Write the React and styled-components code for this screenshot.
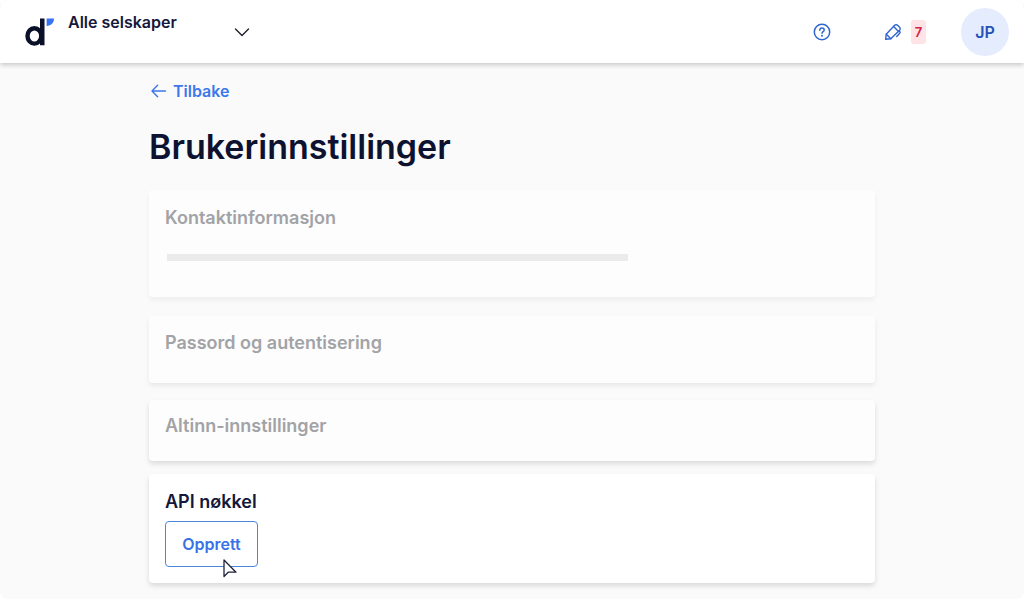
import React from "react";
import styled, { createGlobalStyle } from "styled-components";

const GlobalStyle = createGlobalStyle`
  * { box-sizing: border-box; }
  html { background: #ffffff; }
  body {
    margin: 0;
    font-family: Inter, "Liberation Sans", sans-serif;
    color: #0d1230;
    -webkit-font-smoothing: antialiased;
  }
`;

const Page = styled.div`
  min-height: 100vh;
  background: #fafafa;
  border-radius: 8px;
  overflow: hidden;
`;

const Header = styled.header`
  display: flex;
  align-items: center;
  height: 63px;
  padding: 0 15px 0 24px;
  background: #ffffff;
  border-radius: 8px 8px 0 0;
  box-shadow: 0 2px 5px rgba(0, 0, 0, 0.2);
`;

const HomeLink = styled.a`
  display: flex;
  margin-right: 12px;
`;

const CompanyButton = styled.button`
  display: flex;
  justify-content: space-between;
  width: 182px;
  height: 40px;
  padding: 0;
  border: 0;
  background: none;
  color: #14183a;
  font: 600 16px/20px Inter, "Liberation Sans", sans-serif;
  text-align: left;
  cursor: pointer;

  svg { align-self: center; }
`;

const Actions = styled.div`
  display: flex;
  align-items: center;
  margin-left: auto;
`;

const IconButton = styled.button`
  display: flex;
  align-items: center;
  gap: 9px;
  padding: 0;
  margin-right: ${(p) => p.$after}px;
  border: 0;
  background: none;
  color: #2f66d0;
  font-family: inherit;
  cursor: pointer;
`;

const Count = styled.span`
  width: 15px;
  border-radius: 3px;
  background: #ffe3e7;
  color: #cf2340;
  font-size: 13px;
  font-weight: 600;
  line-height: 24px;
  text-align: center;
`;

const Avatar = styled.button`
  width: 48px;
  height: 48px;
  padding: 0;
  border: 0;
  border-radius: 50%;
  background: #e5ecfd;
  color: #2453b8;
  font: 600 16px/20px Inter, "Liberation Sans", sans-serif;
  cursor: pointer;
`;

const Content = styled.main`
  width: calc(100% - 32px);
  max-width: 726px;
  margin: 0 auto;
  padding: 16px 0;
`;

const BackLink = styled.a`
  display: inline-flex;
  align-items: center;
  gap: 6px;
  padding-left: 2px;
  color: #3d78ea;
  font-size: 16px;
  font-weight: 600;
  line-height: 24px;
  text-decoration: none;
`;

const Title = styled.h1`
  margin: 20px 0 19px;
  font-size: 34px;
  font-weight: 600;
  line-height: 48px;
`;

const Card = styled.section`
  min-height: ${(p) => p.$height}px;
  margin-bottom: ${(p) => p.$after || 0}px;
  padding: ${(p) => p.$top || 16}px 16px 16px;
  border-radius: 4px;
  background: ${(p) => (p.$muted ? "#fdfdfd" : "#ffffff")};
  box-shadow: 0 3px 5px rgba(0, 0, 0, ${(p) => p.$shade});
`;

const CardTitle = styled.h2`
  margin: 0;
  color: ${(p) => (p.$muted ? "#a2a3a6" : "#14183a")};
  font-size: 18px;
  font-weight: 600;
  line-height: 24px;
`;

const Placeholder = styled.div`
  width: 461px;
  max-width: 100%;
  height: 7px;
  margin: 24px 0 0 2px;
  background: #ebebeb;
`;

const CreateButton = styled.button`
  position: relative;
  width: 93px;
  height: 46px;
  margin-top: 7px;
  padding: 0;
  border: 1px solid #4d86d9;
  border-radius: 4px;
  background: #ffffff;
  color: #3872e6;
  font: 600 16px/24px Inter, "Liberation Sans", sans-serif;
  cursor: pointer;
`;

const Pointer = styled.svg`
  position: absolute;
  left: 56px;
  top: 36px;
`;

const Logo = () => (
  <svg width="32" height="32" viewBox="0 0 32 32" fill="none" aria-hidden="true">
    <ellipse cx="10.400" cy="19.900" rx="6.900" ry="7.700" stroke="#0b1029" strokeWidth="4.400" />
    <path d="M16 2.500h4.500v26.800H16z" fill="#0b1029" />
    <path d="M22.600 2.500H30c0 4.300-3 7.300-7.400 7.500z" fill="#3673f5" />
  </svg>
);

const Chevron = () => (
  <svg width="16" height="16" viewBox="0 0 16 16" fill="none" stroke="#20222c" strokeWidth="1.4" strokeLinecap="round" strokeLinejoin="round" aria-hidden="true">
    <path d="M1.500 5 8 11.400 14.500 5" />
  </svg>
);

const HelpIcon = () => (
  <svg width="18" height="18" viewBox="0 0 18 18" fill="none" stroke="currentColor" strokeWidth="1.500" strokeLinecap="round" aria-hidden="true">
    <circle cx="9" cy="9" r="7.700" />
    <path d="M6.800 7.200C6.800 5.900 7.700 5 9 5s2.200.9 2.200 2c0 1.600-2.200 1.600-2.200 3.200" />
    <circle cx="9" cy="12.800" r="1" fill="currentColor" stroke="none" />
  </svg>
);

const PenIcon = () => (
  <svg width="18" height="18" viewBox="0 0 18 18" fill="none" stroke="currentColor" strokeWidth="1.400" strokeLinecap="round" strokeLinejoin="round" aria-hidden="true">
    <path d="M1.700 16.300 2.200 11.200 10.700 2.300a2 2 0 0 1 2.900 0l2 2a2 2 0 0 1 0 2.900L6.800 15.700z" />
    <path d="M9.600 3.500l4.900 4.900M2.300 11.200l4.500 4.500M15.200 7.700l.5.600a1.500 1.500 0 0 1 0 2l-3 3.100" />
  </svg>
);

const ArrowLeft = () => (
  <svg width="16" height="16" viewBox="0 0 16 16" fill="none" stroke="currentColor" strokeWidth="1.400" strokeLinecap="round" strokeLinejoin="round" aria-hidden="true">
    <path d="M14.500 8H1M6.600 2.200 1 8l5.600 5.800" />
  </svg>
);

export default function App() {
  return (
    <Page>
      <GlobalStyle />
      <Header>
        <HomeLink href="#" aria-label="Hjem"><Logo /></HomeLink>
        <CompanyButton type="button">Alle selskaper<Chevron /></CompanyButton>
        <Actions>
          <IconButton type="button" aria-label="Hjelp" $after={53}><HelpIcon /></IconButton>
          <IconButton type="button" $after={35}><PenIcon /><Count>7</Count></IconButton>
          <Avatar type="button">JP</Avatar>
        </Actions>
      </Header>
      <Content>
        <BackLink href="#"><ArrowLeft />Tilbake</BackLink>
        <Title>Brukerinnstillinger</Title>
        <Card $muted $shade={0.05} $height={107} $after={19}>
          <CardTitle $muted>Kontaktinformasjon</CardTitle>
          <Placeholder />
        </Card>
        <Card $muted $shade={0.07} $height={67} $after={17} $top={15}>
          <CardTitle $muted>Passord og autentisering</CardTitle>
        </Card>
        <Card $muted $shade={0.12} $height={61} $after={13} $top={14}>
          <CardTitle $muted>Altinn-innstillinger</CardTitle>
        </Card>
        <Card $shade={0.13} $height={109}>
          <CardTitle>API nøkkel</CardTitle>
          <CreateButton type="button">
            Opprett
            <Pointer width="16" height="20" viewBox="0 0 16 20" aria-hidden="true">
              <path d="M2 2v16.500l4.200-4.300H14z" fill="#fff" stroke="#20243a" strokeWidth="1.300" strokeLinejoin="round" />
            </Pointer>
          </CreateButton>
        </Card>
      </Content>
    </Page>
  );
}
